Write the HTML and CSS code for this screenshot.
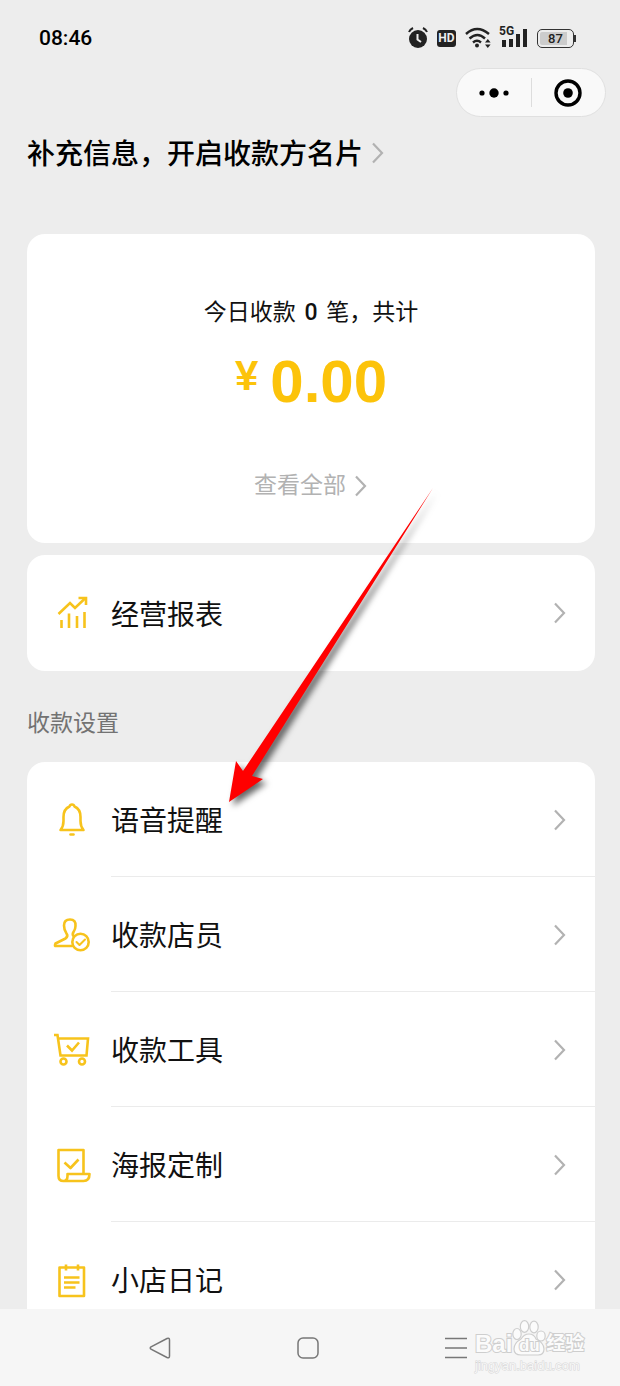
FILE: index.html
```html
<!DOCTYPE html>
<html lang="zh-CN">
<head>
<meta charset="utf-8">
<meta name="viewport" content="width=device-width, initial-scale=1">
<title>收款</title>
<link rel="stylesheet" href="styles.css">
</head>
<body>
<svg class="defs" aria-hidden="true">
  <symbol id="chevron" viewBox="0 0 14 22"><path d="M2 1.500l9 9.500-9 9.500" fill="none" stroke="currentColor" stroke-width="2.200"/></symbol>
</svg>
<div class="screen">
  <header class="status">
    <time class="clock">08:46</time>
    <div class="status-icons">
      <svg width="20" height="22" viewBox="0 0 20 22"><circle cx="10" cy="12" r="9" fill="#222"/><path d="M1 5q1-2.500 4-4M19 5q-1-2.500-4-4" fill="none" stroke="#222" stroke-width="2"/><path d="M9.500 7v5.500l3.500 2.500" fill="none" stroke="#ededed" stroke-width="2"/></svg>
      <span class="hd">HD</span>
      <svg width="26" height="22" viewBox="0 0 26 22"><g fill="none" stroke="#222" stroke-width="2.400"><path d="M1 7q11-10 23 0"/><path d="M4.500 11.500q8-7 15.500 0"/><path d="M8 15.500q4-3.500 8 0"/></g><circle cx="12" cy="18.500" r="2" fill="#222"/><path d="M20 15.500l2.800-3.500 2.800 3.500zM20 17.500l2.800 3.500 2.800-3.500z" fill="#222"/></svg>
      <span class="signal">
        <span class="gen">5G</span>
        <svg width="28" height="22" viewBox="0 0 28 22"><path d="M2 13h4v7H2zM9 12h4v8H9zM16 7h4v13h-4zM23 2h4v18h-4z" fill="#222"/></svg>
      </span>
      <span class="battery"><span class="level">87</span></span>
    </div>
  </header>

  <div class="capsule">
    <button class="capsule-btn" aria-label="更多"><svg width="30" height="12" viewBox="0 0 30 12"><circle cx="3" cy="6" r="2.600"/><circle cx="15" cy="6" r="4.700"/><circle cx="27" cy="6" r="2.600"/></svg></button>
    <button class="capsule-btn" aria-label="关闭"><svg width="28" height="28" viewBox="0 0 28 28"><circle cx="14" cy="14" r="12" fill="none" stroke="#000" stroke-width="3.400"/><circle cx="14" cy="14" r="4.800"/></svg></button>
  </div>

  <main class="content">
    <h1 class="title"><a href="#card"><span class="title-text">补充信息，开启收款方名片</span><svg class="chev"><use href="#chevron"/></svg></a></h1>

    <section class="card summary">
      <p class="today">今日收款 <span class="count">0</span> 笔，共计</p>
      <p class="amount"><span class="yen">¥</span><span>0.00</span></p>
      <a class="all" href="#all">查看全部<svg class="chev"><use href="#chevron"/></svg></a>
    </section>

    <section class="card">
      <a class="row" href="#report">
        <svg class="icon" viewBox="0 0 40 40"><g fill="none" stroke="#f7c31c" stroke-width="2.600"><path d="M6.500 21l11.500-11 5 5L33.500 5"/><path d="M26.500 5h7.500v7"/><path d="M9.500 27v8M17 20.500v14.500M25 23v12M32.500 19v16"/></g></svg>
        <span class="name">经营报表</span>
        <svg class="chev"><use href="#chevron"/></svg>
      </a>
    </section>

    <h2 class="label">收款设置</h2>

    <section class="card list">
      <a class="row" href="#voice">
        <svg class="icon" viewBox="0 0 40 40"><g fill="none" stroke="#f7c31c" stroke-width="2.600" stroke-linejoin="round" stroke-linecap="round"><path d="M8.500 30q3-3.500 3-9v-4q0-8 6-10.500Q18 4.500 20 4.500t2.500 2q6 2.500 6 10.500v4q0 5.500 3 9z"/><path d="M18.500 34.500h3"/></g></svg>
        <span class="name">语音提醒</span>
        <svg class="chev"><use href="#chevron"/></svg>
      </a>
      <a class="row" href="#clerk">
        <svg class="icon" viewBox="0 0 40 40"><g fill="none" stroke="#f7c31c" stroke-width="2.600" stroke-linejoin="round" stroke-linecap="round"><path d="M20 31H3.500q-1 0 0-2.500l10-5q3-2.500 1-5Q12 15 12 10.500q0-6 6-6t5.500 6.500q0 3-2 6-1.500 2.500 0 4"/><circle cx="28.500" cy="27" r="8.200"/><path d="M24.500 27l3 3 5.500-5.500" stroke-width="2"/></g></svg>
        <span class="name">收款店员</span>
        <svg class="chev"><use href="#chevron"/></svg>
      </a>
      <a class="row" href="#tools">
        <svg class="icon" viewBox="0 0 40 40"><g fill="none" stroke="#f7c31c" stroke-width="2.600"><path d="M2 5h3.500L8.500 25.500h26L36 8.500H6.500"/><path d="M15 15.500l5 5 7-8"/><circle cx="11.500" cy="31.500" r="3"/><circle cx="30" cy="31.500" r="3"/></g></svg>
        <span class="name">收款工具</span>
        <svg class="chev"><use href="#chevron"/></svg>
      </a>
      <a class="row" href="#poster">
        <svg class="icon" viewBox="0 0 40 40"><g fill="none" stroke="#f7c31c" stroke-width="2.600" stroke-linejoin="round"><path d="M31.500 29V5H6.500V31q0 5 5 5h20q6 0 6-7H15.500V31q0 5-4 5"/><path d="M12.500 17.500l6 5.500 8-8.500"/></g></svg>
        <span class="name">海报定制</span>
        <svg class="chev"><use href="#chevron"/></svg>
      </a>
      <a class="row" href="#diary">
        <svg class="icon" viewBox="0 0 40 40"><g fill="none" stroke="#f7c31c" stroke-width="2.600" stroke-linejoin="round"><path d="M7.500 7.500h24.500V36h-24.500z"/><path d="M14 4.500v6M26 4.500v6M12 17.500h15.500M12 22.500h15.500M12 27.500h11.500"/></g></svg>
        <span class="name">小店日记</span>
        <svg class="chev"><use href="#chevron"/></svg>
      </a>
    </section>
  </main>

  <nav class="navbar">
    <button aria-label="返回"><svg width="22" height="22" viewBox="0 0 22 22"><path d="M2 9.800L18 1.500q2.500-1 2.500 1.500v16q0 2.500-2.500 1.500L2 12.200q-1.500-1.200 0-2.400z"/></svg></button>
    <button aria-label="主页"><svg width="22" height="22" viewBox="0 0 22 22"><rect x="1" y="1" width="20" height="20" rx="5"/></svg></button>
    <button aria-label="最近任务"><svg width="22" height="22" viewBox="0 0 22 22"><path d="M0 1.500h22M0 11h22M0 20.500h22"/></svg></button>
  </nav>

  <div class="watermark">
    <div class="brand"><span>Bai</span><span class="paw"><svg width="34" height="36" viewBox="0 0 34 36"><g fill="#fbfbfb" stroke="#cecece" stroke-width="1.200"><ellipse cx="5" cy="14" rx="4.200" ry="5.500"/><ellipse cx="12.500" cy="6.500" rx="4.200" ry="5.800"/><ellipse cx="22" cy="7" rx="4.200" ry="5.800"/><ellipse cx="29" cy="16" rx="4.200" ry="5"/><path d="M17 14q5 0 7 5 8 4 8 10 0 6-6 6H9q-7 0-7-6 0-6 7-10 3-5 8-5z"/></g></svg><span class="du">du</span></span><span class="exp">经验</span></div>
    <div class="site">jingyan.baidu.com</div>
  </div>

  <svg class="arrow" width="240" height="350" viewBox="0 0 240 350"><path d="M233 18L52 306 63 309 29 332 36 291 43 301z" class="arrow-body"/></svg>
</div>
</body>
</html>
```
FILE: styles.css
```css
* { box-sizing: border-box; }
body {
  margin: 0;
  background: #ededed;
  color: #111;
  font-family: Roboto, "Noto Sans CJK SC", sans-serif;
}
h1, h2, p { margin: 0; font-weight: 400; }
a { color: inherit; text-decoration: none; }
button { border: 0; padding: 0; background: none; display: flex; align-items: center; justify-content: center; }
svg { display: block; flex: none; }
.defs { position: absolute; width: 0; height: 0; }

.screen {
  position: relative;
  height: 100vh;
  display: flex;
  flex-direction: column;
  overflow: hidden;
}

.status {
  flex: none;
  display: flex;
  align-items: center;
  justify-content: space-between;
  padding: 24px 46px 16px 39px;
}
.clock { font-size: 21px; line-height: 28px; font-weight: 500; color: #000; }
.status-icons { display: flex; align-items: center; gap: 9px; }
.hd {
  width: 19px;
  height: 17px;
  border-radius: 3px;
  background: #222;
  color: #ededed;
  font-size: 12px;
  line-height: 17px;
  font-weight: 700;
  text-align: center;
}
.signal { position: relative; }
.gen {
  position: absolute;
  left: -1px;
  top: -2px;
  font-size: 12px;
  line-height: 13px;
  font-weight: 700;
  color: #222;
}
.battery {
  position: relative;
  width: 37px;
  height: 19px;
  padding: 2px;
  border: 1px solid #333;
  border-radius: 5px;
}
.battery::after {
  content: "";
  position: absolute;
  right: -3px;
  top: 5px;
  width: 2px;
  height: 7px;
  background: #333;
}
.level {
  display: block;
  background: linear-gradient(90deg, #ccc 86%, transparent 86%);
  border-radius: 2px;
  color: #222;
  font-size: 13px;
  line-height: 13px;
  font-weight: 500;
  text-align: center;
}

.capsule {
  flex: none;
  align-self: flex-end;
  display: flex;
  width: 150px;
  height: 49px;
  margin-right: 14px;
  padding: 9px 0;
  border: 1px solid #e0e0e0;
  border-radius: 25px;
  background: #f9f9f9;
}
.capsule-btn { flex: 1; }
.capsule-btn + .capsule-btn { border-left: 1px solid #ddd; }

.content { flex: 1; min-height: 0; overflow: hidden; padding: 14px 25px 0 27px; }
.chev { width: 14px; height: 22px; color: #b2b2b2; }
.title { font-size: 28px; line-height: 40px; font-weight: 500; color: #000; margin-bottom: 59px; }
.title a { display: flex; align-items: center; gap: 8px; }
.title-text { padding-top: 4px; }

.card { background: #fff; border-radius: 18px; }
.summary {
  display: flex;
  flex-direction: column;
  align-items: center;
  padding: 63px 0 45px;
  margin-bottom: 12px;
}
.today { font-size: 23px; line-height: 32px; }
.count { font-weight: 500; margin: 0 3px; }
.amount {
  display: flex;
  align-items: flex-start;
  gap: 12px;
  margin: 17px 0 56px;
  color: #fcc30a;
  font-family: "Liberation Sans", sans-serif;
  font-size: 60px;
  line-height: 72px;
  font-weight: 700;
}
.yen { font-size: 42px; line-height: 60px; }
.all { display: flex; align-items: center; gap: 8px; font-size: 23px; line-height: 24px; color: #b2b2b2; }

.row {
  display: flex;
  align-items: center;
  height: 116px;
  padding: 0 28px 0 25px;
}
.icon { width: 40px; height: 40px; margin-right: 19px; }
.name { flex: 1; padding-top: 5px; font-size: 28px; line-height: 40px; }
.label { padding: 37px 0 22px; font-size: 23px; line-height: 32px; color: #737373; }
.list .row { height: 115px; }
.list .row:not(:last-child) {
  background: linear-gradient(#ebebeb, #ebebeb) 84px 100% / 100% 1px no-repeat;
}

.navbar {
  flex: none;
  display: flex;
  justify-content: center;
  gap: 126px;
  height: 77px;
  padding-right: 5px;
  background: #f6f6f6;
}
.navbar path, .navbar rect { fill: none; stroke: #777; stroke-width: 1.500; }

.watermark {
  position: absolute;
  right: 34px;
  bottom: 13px;
  width: 111px;
  color: #fbfbfb;
  font-family: "Liberation Sans", "Noto Sans CJK SC", sans-serif;
  -webkit-text-stroke: 2px #cecece;
  paint-order: stroke fill;
}
.watermark svg { paint-order: normal; }
.brand { display: flex; align-items: flex-end; font-size: 24px; line-height: 28px; font-weight: 700; }
.paw { position: relative; margin-bottom: 2px; }
.du { position: absolute; left: 0; right: 0; bottom: 0; font-size: 17px; line-height: 20px; text-align: center; }
.exp { font-size: 19px; }
.site { font-size: 13px; line-height: 15px; color: #f6f6f6; -webkit-text-stroke: 1px #d6d6d6; }

.arrow { position: absolute; left: 200px; top: 470px; pointer-events: none; filter: drop-shadow(4px 4px 3px rgba(0, 0, 0, .6)); }
.arrow-body { fill: #f00; }
```
